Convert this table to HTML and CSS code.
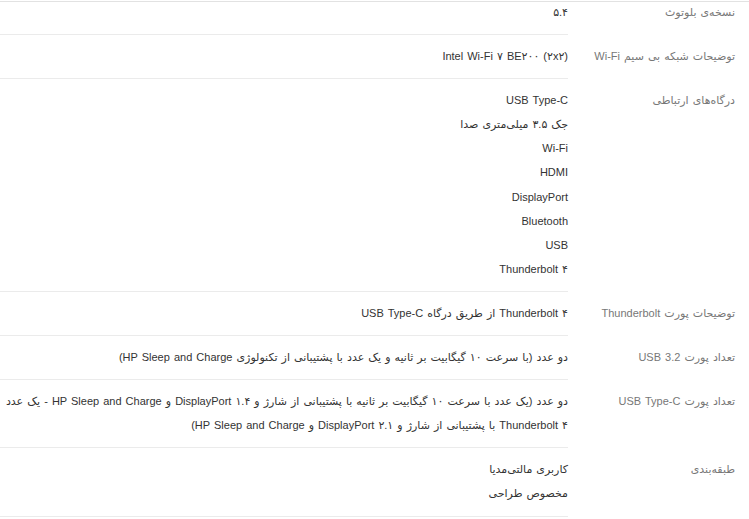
FILE: index.html
```html
<!DOCTYPE html>
<html lang="fa" dir="rtl">
<head>
    <meta charset="UTF-8">
    <meta name="viewport" content="width=device-width, initial-scale=1.0">
    <title>مشخصات فنی</title>
    <link rel="stylesheet" href="styles.css">
</head>
<body>
    <div class="specs">
        <div class="spec-row first">
            <div class="spec-label">نسخه‌ی بلوتوث</div>
            <div class="spec-value"><p>۵.۴</p></div>
        </div>
        <div class="spec-row">
            <div class="spec-label">توضیحات شبکه بی سیم Wi-Fi</div>
            <div class="spec-value"><p><bdi>Intel Wi-Fi ۷ BE۲۰۰ (۲x۲)</bdi></p></div>
        </div>
        <div class="spec-row">
            <div class="spec-label">درگاه‌های ارتباطی</div>
            <div class="spec-value">
                <p>USB Type-C</p>
                <p>جک ۳.۵ میلی‌متری صدا</p>
                <p>Wi-Fi</p>
                <p>HDMI</p>
                <p>DisplayPort</p>
                <p>Bluetooth</p>
                <p>USB</p>
                <p>Thunderbolt ۴</p>
            </div>
        </div>
        <div class="spec-row">
            <div class="spec-label">توضیحات پورت Thunderbolt</div>
            <div class="spec-value"><p>Thunderbolt ۴ از طریق درگاه USB Type-C</p></div>
        </div>
        <div class="spec-row">
            <div class="spec-label">تعداد پورت USB 3.2</div>
            <div class="spec-value"><p>دو عدد (با سرعت ۱۰ گیگابیت بر ثانیه و یک عدد با پشتیبانی از تکنولوژی HP Sleep and Charge)</p></div>
        </div>
        <div class="spec-row">
            <div class="spec-label">تعداد پورت USB Type-C</div>
            <div class="spec-value"><p>دو عدد (یک عدد با سرعت ۱۰ گیگابیت بر ثانیه با پشتیبانی از شارژ و DisplayPort ۱.۴ و HP Sleep and Charge - یک عدد Thunderbolt ۴ با پشتیبانی از شارژ و DisplayPort ۲.۱ و HP Sleep and Charge)</p></div>
        </div>
        <div class="spec-row">
            <div class="spec-label">طبقه‌بندی</div>
            <div class="spec-value">
                <p>کاربری مالتی‌مدیا</p>
                <p>مخصوص طراحی</p>
            </div>
        </div>
    </div>
</body>
</html>
```

FILE: styles.css
```css
body {
    margin: 0;
    padding: 0;
    background-color: #fff;
    font-family: "Liberation Sans", "DejaVu Sans", sans-serif;
    font-size: 11px;
    word-spacing: 1px;
    color: #333;
    overflow: hidden;
}
.specs {
    margin-top: 1px;
    border-top: 1px solid #e2e2e2;
}
.spec-row {
    display: flex;
    align-items: flex-start;
}
.spec-row.first {
    margin-top: -11px;
}
.spec-label {
    width: 167px;
    flex-shrink: 0;
    padding: 9px 14px 10px 0;
    line-height: 24.1px;
    color: #777;
}
.spec-value {
    flex: 1;
    padding: 9px 0 10px;
    border-bottom: 1px solid #ebebeb;
    line-height: 24.1px;
}
.spec-value p {
    margin: 0;
}
```
